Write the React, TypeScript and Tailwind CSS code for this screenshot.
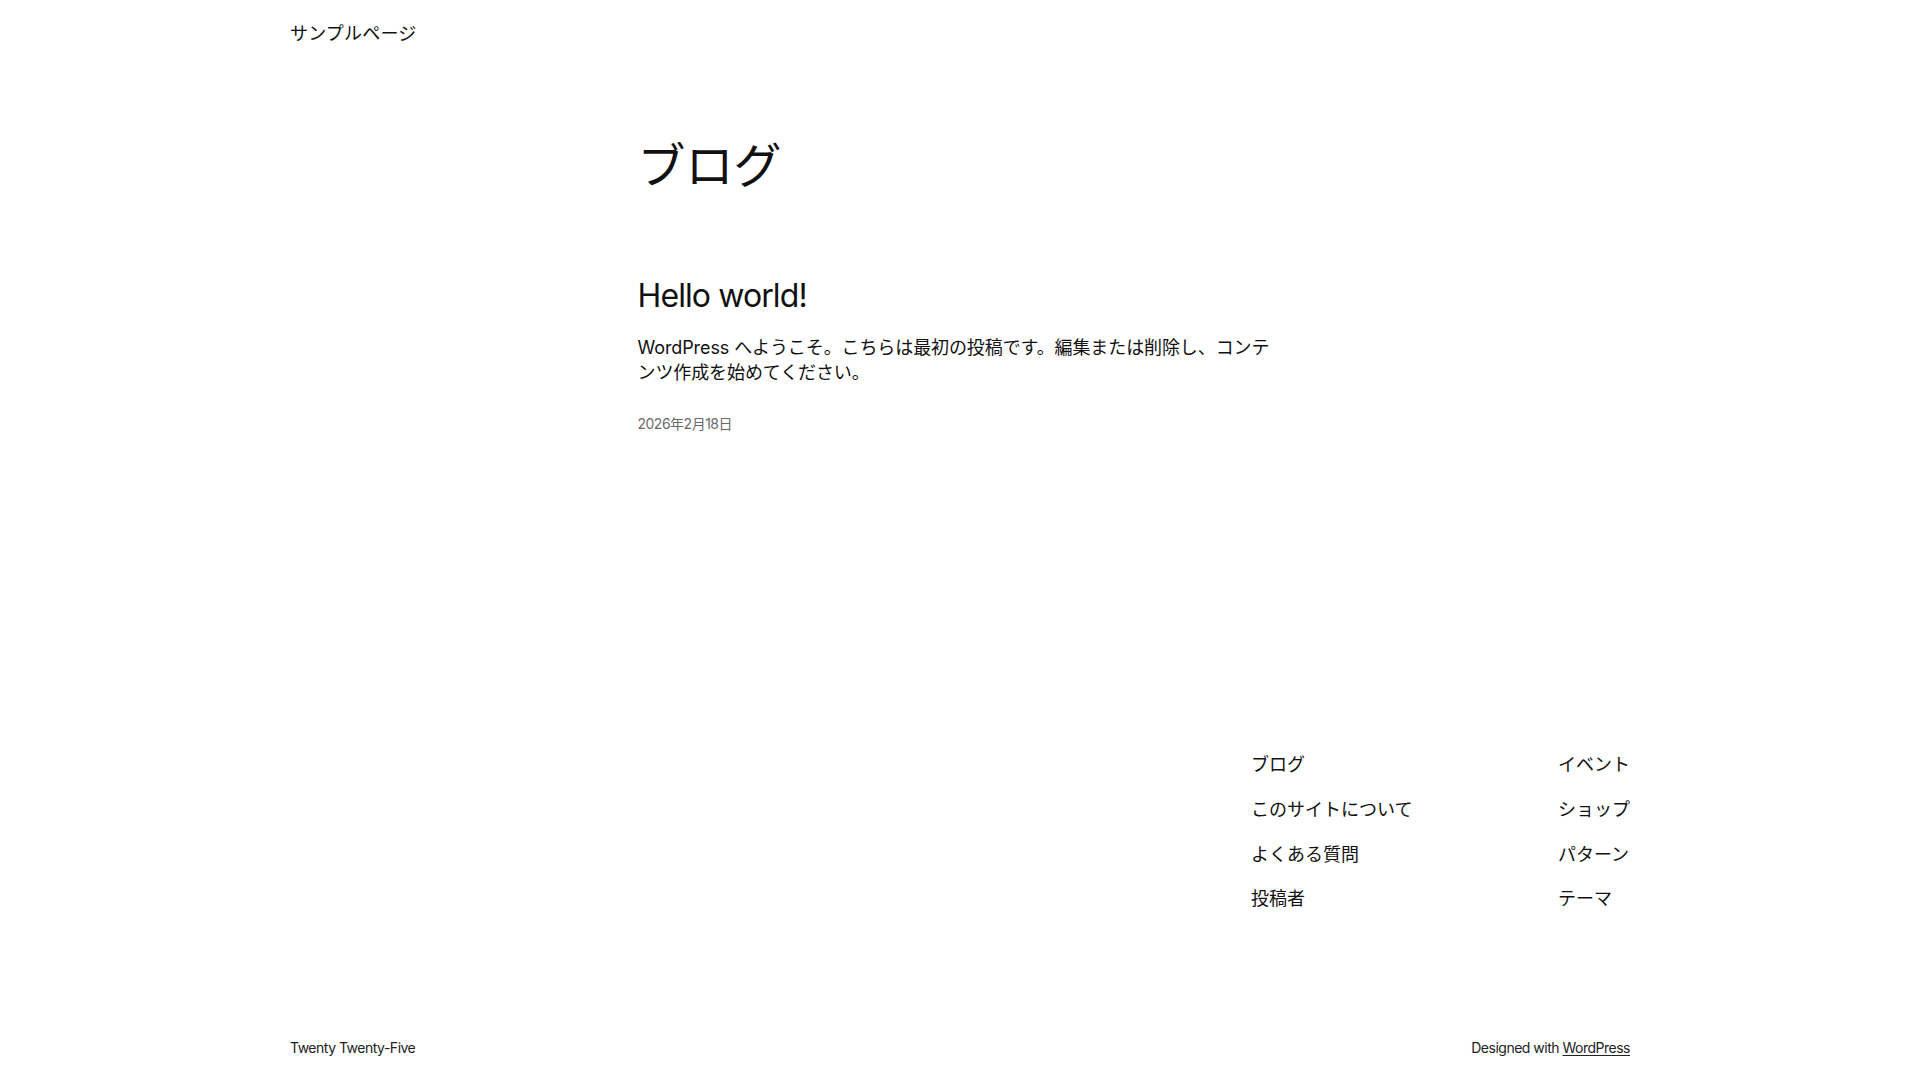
const font = "font-['Inter','Noto_Sans_CJK_JP',sans-serif]"

const FOOTER_LEFT = ["ブログ", "このサイトについて", "よくある質問", "投稿者"]
const FOOTER_RIGHT = ["イベント", "ショップ", "パターン", "テーマ"]

export default function App() {
  return (
    <div className={`${font} min-h-[1080px] bg-white text-[#111111] antialiased`}>
      {/* Header */}
      <header className="mx-auto w-[1340px] pt-[20px]">
        <nav className="text-[18px] leading-[27px] tracking-[0.2px]">
          <a href="#">サンプルページ</a>
        </nav>
      </header>

      {/* Main */}
      <main className="mx-auto w-[645px]">
        <h1 className="mt-[89.5px] text-[48px] leading-[58px] font-normal">ブログ</h1>

        <article className="mt-[82.7px]">
          <h2 className="text-[32px] leading-[38px] font-normal tracking-[-0.9px]">
            <a href="#">Hello world!</a>
          </h2>
          <p className="mt-[20.3px] text-[18px] leading-[25px] tracking-[-0.1px]">
            WordPress へようこそ。こちらは最初の投稿です。編集または削除し、コンテンツ作成を始めてください。
          </p>
          <div className="mt-[28.7px] text-[14px] leading-[20px] tracking-[-0.5px] text-[#6b6b6b]">
            2026年2月18日
          </div>
        </article>
      </main>

      {/* Footer */}
      <footer className="mx-auto mt-[317.3px] w-[1340px]">
        <div className="flex justify-end">
          <div className="flex w-[379px] justify-between text-[18px] leading-[27px]">
            <ul className="flex flex-col gap-[17.6px]">
              {FOOTER_LEFT.map((item) => (
                <li key={item}>
                  <a href="#">{item}</a>
                </li>
              ))}
            </ul>
            <ul className="flex flex-col gap-[17.6px]">
              {FOOTER_RIGHT.map((item) => (
                <li key={item}>
                  <a href="#">{item}</a>
                </li>
              ))}
            </ul>
          </div>
        </div>

        <div className="mt-[126px] flex justify-between text-[14px] leading-[20px] tracking-[-0.5px] text-[#222222]">
          <p>Twenty Twenty-Five</p>
          <p>
            Designed with{" "}
            <a href="#" className="underline underline-offset-2">
              WordPress
            </a>
          </p>
        </div>
      </footer>
    </div>
  )
}
